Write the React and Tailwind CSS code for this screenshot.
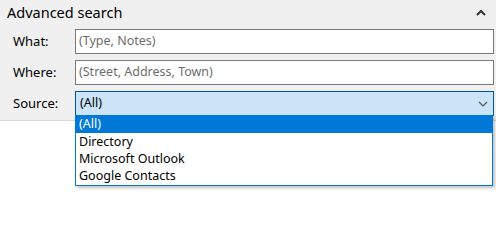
const font = { fontFamily: '"Noto Sans", "Open Sans", sans-serif' };

const Field = ({ label, placeholder }) => (
  <div className="flex items-center h-[25px]">
    <label className="w-[75px] shrink-0 pl-[13px] text-[13px] text-[#000]">{label}</label>
    <div className="flex-1 h-[25px] bg-white border border-[#7a7a7a] flex items-center px-[3px] text-[12.5px] text-[#6d6d6d]">
      {placeholder}
    </div>
  </div>
);

export default function App() {
  const options = ["(All)", "Directory", "Microsoft Outlook", "Google Contacts"];

  return (
    <div className="relative w-[496px] h-[242px] bg-white overflow-hidden" style={font}>
      <div className="h-[121px] bg-[#f0f0f0] border-b border-[#d9d9d9] pr-[2px]">
        {/* header */}
        <div className="flex items-center justify-between h-[25px] pl-[7px] pr-[8px]">
          <span className="text-[14.5px] text-[#000] leading-none">Advanced search</span>
          <svg width="10" height="7" viewBox="0 0 10 7">
            <path d="M1 6 L5 2 L9 6" fill="none" stroke="#333" strokeWidth="2" />
          </svg>
        </div>

        <div className="flex flex-col gap-[6px] mt-[4px]">
          <Field label="What:" placeholder="(Type, Notes)" />
          <Field label="Where:" placeholder="(Street, Address, Town)" />

          {/* source */}
          <div className="flex items-center h-[25px]">
            <label className="w-[75px] shrink-0 pl-[13px] text-[13px] text-[#000]">Source:</label>
            <div className="flex-1 h-[25px] bg-[#cce4f7] border border-[#005499] flex items-center justify-between pl-[4px] pr-[5px] text-[12.5px] text-[#000]">
              <span>(All)</span>
              <svg width="10" height="6" viewBox="0 0 10 6">
                <path d="M1 1 L5 5 L9 1" fill="none" stroke="#555" strokeWidth="1.2" />
              </svg>
            </div>
          </div>
        </div>
      </div>

      {/* open list */}
      <div className="absolute left-[75px] top-[115px] w-[418px] bg-white border border-[#0078d7] shadow-[2px_2px_3px_rgba(0,0,0,0.25)]">
        {options.map((opt, i) => (
          <div
            key={opt}
            className={
              "h-[17.25px] flex items-center pl-[3px] text-[12.5px] " +
              (i === 0 ? "bg-[#0078d7] text-white" : "text-[#000]")
            }
          >
            {opt}
          </div>
        ))}
      </div>
    </div>
  );
}
